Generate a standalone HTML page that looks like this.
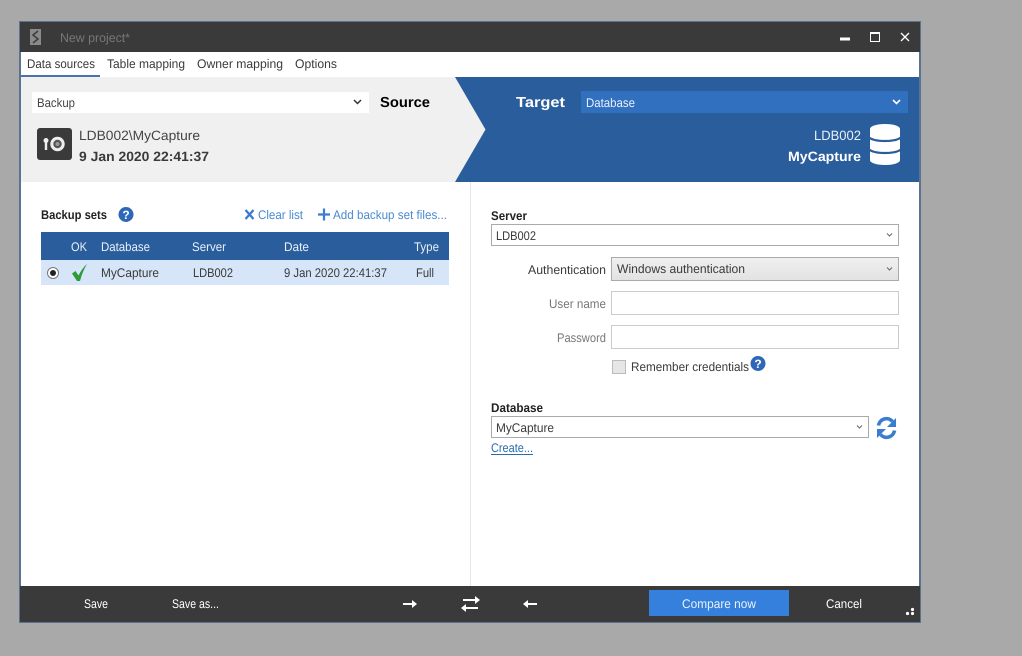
<!DOCTYPE html>
<html lang="en">
<head>
<meta charset="utf-8">
<title>New project*</title>
<style>
html,body{margin:0;padding:0;width:1022px;height:656px;overflow:hidden;background:#a9a9a9}
svg{display:block}
text{font-family:"Liberation Sans",sans-serif;font-size:12.5px;fill:#3a3a3a;white-space:pre;text-rendering:geometricPrecision}
.b{font-weight:bold}
.w{fill:#fff}
.g{fill:#777}
.l{fill:#4a8ad0}
</style>
</head>
<body>
<svg xmlns="http://www.w3.org/2000/svg" width="1022" height="656" viewBox="0 0 1022 656">
<defs>
<linearGradient id="ag" x1="0" y1="0" x2="0" y2="1"><stop offset="0" stop-color="#f0f0f0"/><stop offset="1" stop-color="#e2e2e2"/></linearGradient>
</defs>
<rect width="1022" height="656" fill="#a9a9a9"/>
<!-- window -->
<rect x="19" y="21" width="902" height="602" fill="#5a7390"/>
<rect x="21" y="22" width="898" height="600" fill="#fff"/>
<!-- title bar -->
<rect x="20" y="22" width="900" height="30" fill="#3a3a3a"/>
<path d="M30 29h11v16H30z" fill="#8a8a8a"/>
<path d="M38 31l-5 4 5 4-5 4" fill="none" stroke="#3f3f3f" stroke-width="1.600"/>
<text x="60" y="42" textLength="70" lengthAdjust="spacingAndGlyphs" style="fill:#777">New project*</text>
<rect x="840" y="37.500" width="10" height="3" fill="#fff"/>
<rect x="870.500" y="32.500" width="9" height="9" fill="none" stroke="#fff"/>
<rect x="870" y="32" width="10" height="2" fill="#fff"/>
<path d="M901 33l8 8M909 33l-8 8" stroke="#fff" stroke-width="1.300" fill="none"/>
<!-- tabs -->
<text x="27" y="68" textLength="68" lengthAdjust="spacingAndGlyphs">Data sources</text>
<text x="107" y="68" textLength="78" lengthAdjust="spacingAndGlyphs">Table mapping</text>
<text x="197" y="68" textLength="86" lengthAdjust="spacingAndGlyphs">Owner mapping</text>
<text x="295" y="68" textLength="42" lengthAdjust="spacingAndGlyphs">Options</text>
<rect x="21" y="75" width="79" height="2" fill="#4a72ac"/>
<!-- source / target header -->
<rect x="21" y="77" width="898" height="105" fill="#f0f0f0"/>
<path d="M455 77H919V182H455L485.500 129.500Z" fill="#2a5d9c"/>
<rect x="32" y="92" width="337" height="21" fill="#fff"/>
<text x="37" y="107" textLength="38" lengthAdjust="spacingAndGlyphs" style="fill:#444">Backup</text>
<path d="M354 100l3.500 3.500 3.500-3.500" fill="none" stroke="#333" stroke-width="1.500"/>
<text x="380" y="107" textLength="50" lengthAdjust="spacingAndGlyphs" class="b" style="font-size:14.500px;fill:#000">Source</text>
<text x="516" y="107" textLength="49" lengthAdjust="spacingAndGlyphs" class="b w" style="font-size:14.500px">Target</text>
<rect x="581" y="91" width="327" height="22" fill="#3070bf"/>
<text x="586" y="107" textLength="49" lengthAdjust="spacingAndGlyphs" style="fill:#e8f0fa">Database</text>
<path d="M893 100l3.500 3.500 3.500-3.500" fill="none" stroke="#fff" stroke-width="1.600"/>
<!-- backup icon -->
<rect x="37" y="128" width="35" height="32" rx="3" fill="#3a3a3a"/>
<circle cx="57.500" cy="144" r="5.700" fill="#555" stroke="#eee" stroke-width="3"/>
<circle cx="57.500" cy="144" r="2" fill="#999"/>
<circle cx="46" cy="140.500" r="2.500" fill="#eee"/>
<rect x="44.800" y="141" width="2.400" height="9" fill="#eee"/>
<text x="79" y="140" textLength="121" lengthAdjust="spacingAndGlyphs" style="font-size:13.500px;fill:#444">LDB002\MyCapture</text>
<text x="79" y="161" textLength="130" lengthAdjust="spacingAndGlyphs" class="b" style="font-size:13.500px">9 Jan 2020 22:41:37</text>
<!-- target info -->
<text x="814" y="140" textLength="47" lengthAdjust="spacingAndGlyphs" style="font-size:13.500px;fill:#e8f0fa">LDB002</text>
<text x="788" y="161" textLength="73" lengthAdjust="spacingAndGlyphs" class="b w" style="font-size:13.500px">MyCapture</text>
<!-- db icon -->
<path d="M870 129c0-3 7-5 15-5s15 2 15 5v31c0 3-7 5-15 5s-15-2-15-5z" fill="#fff"/>
<g fill="none" stroke="#2a5d9c" stroke-width="2.200">
<path d="M869 137.500c3 2.300 9 3.500 16 3.500s13-1.200 16-3.500"/>
<path d="M869 149.500c3 2.300 9 3.500 16 3.500s13-1.200 16-3.500"/>
</g>
<!-- divider -->
<rect x="470" y="182" width="1" height="404" fill="#e6e6e6"/>
<!-- backup sets -->
<text x="41" y="219" textLength="66" lengthAdjust="spacingAndGlyphs" class="b" style="fill:#222">Backup sets</text>
<circle cx="126" cy="214.500" r="7.500" fill="#2f67b8"/>
<text x="126" y="219" text-anchor="middle" class="b w" style="font-size:12px">?</text>
<path d="M245.500 210l8 9M253.500 210l-8 9" stroke="#3a7ccf" stroke-width="2.300" fill="none"/>
<text x="258" y="219" textLength="45" lengthAdjust="spacingAndGlyphs" class="l">Clear list</text>
<path d="M318 214.500h12M324 208.500v12" stroke="#3a7ccf" stroke-width="2.200" fill="none"/>
<text x="333" y="219" textLength="114" lengthAdjust="spacingAndGlyphs" class="l">Add backup set files...</text>
<!-- table -->
<rect x="41" y="232" width="408" height="28" fill="#2a5d9c"/>
<rect x="41" y="260" width="408" height="25" fill="#d6e5f8"/>
<text x="71" y="251" textLength="16" lengthAdjust="spacingAndGlyphs" style="fill:#e8f0fa">OK</text>
<text x="101" y="251" textLength="49" lengthAdjust="spacingAndGlyphs" style="fill:#e8f0fa">Database</text>
<text x="192" y="251" textLength="34" lengthAdjust="spacingAndGlyphs" style="fill:#e8f0fa">Server</text>
<text x="284" y="251" textLength="25" lengthAdjust="spacingAndGlyphs" style="fill:#e8f0fa">Date</text>
<text x="414" y="251" textLength="25" lengthAdjust="spacingAndGlyphs" style="fill:#e8f0fa">Type</text>
<circle cx="53" cy="273" r="5.500" fill="#fff" stroke="#777"/>
<circle cx="53" cy="273" r="3" fill="#222"/>
<path d="M72 273.500l3.500-2.500 3 4.500c2.200-4.500 5-8.500 8.500-11.500-3 5-5.500 11-7 17h-3z" fill="#2f9a3a"/>
<text x="101" y="277" textLength="58" lengthAdjust="spacingAndGlyphs">MyCapture</text>
<text x="193" y="277" textLength="40" lengthAdjust="spacingAndGlyphs">LDB002</text>
<text x="284" y="277" textLength="103" lengthAdjust="spacingAndGlyphs">9 Jan 2020 22:41:37</text>
<text x="416" y="277" textLength="18" lengthAdjust="spacingAndGlyphs">Full</text>
<!-- server -->
<text x="491" y="220" textLength="36" lengthAdjust="spacingAndGlyphs" class="b" style="fill:#222">Server</text>
<rect x="491.500" y="224.500" width="407" height="21" fill="#fff" stroke="#aaa"/>
<text x="496" y="240" textLength="40" lengthAdjust="spacingAndGlyphs">LDB002</text>
<path d="M887 233.500l2.500 2.500 2.500-2.500" fill="none" stroke="#666"/>
<text x="528" y="274" textLength="78" lengthAdjust="spacingAndGlyphs">Authentication</text>
<rect x="611.500" y="257.500" width="287" height="23" fill="url(#ag)" stroke="#aaa"/>
<text x="617" y="273" textLength="128" lengthAdjust="spacingAndGlyphs">Windows authentication</text>
<path d="M887 267.500l2.500 2.500 2.500-2.500" fill="none" stroke="#666"/>
<text x="549" y="308" textLength="57" lengthAdjust="spacingAndGlyphs" class="g">User name</text>
<rect x="611.500" y="291.500" width="287" height="23" fill="#fff" stroke="#ccc"/>
<text x="557" y="342" textLength="49" lengthAdjust="spacingAndGlyphs" class="g">Password</text>
<rect x="611.500" y="325.500" width="287" height="23" fill="#fff" stroke="#ccc"/>
<rect x="612.500" y="360.500" width="13" height="13" fill="#e6e6e6" stroke="#bbb"/>
<text x="631" y="371" textLength="118" lengthAdjust="spacingAndGlyphs">Remember credentials</text>
<circle cx="758" cy="363.500" r="7.500" fill="#2f67b8"/>
<text x="758" y="368" text-anchor="middle" class="b w" style="font-size:12px">?</text>
<!-- database -->
<text x="491" y="412" textLength="52" lengthAdjust="spacingAndGlyphs" class="b" style="fill:#222">Database</text>
<rect x="491.500" y="416.500" width="377" height="21" fill="#fff" stroke="#aaa"/>
<text x="496" y="432" textLength="58" lengthAdjust="spacingAndGlyphs">MyCapture</text>
<path d="M857 425.500l2.500 2.500 2.500-2.500" fill="none" stroke="#666"/>
<g fill="none" stroke="#3a7ccf" stroke-width="3.600">
<path d="M878.500 425.500a8 8 0 0 1 14-4"/>
<path d="M894.500 430.500a8 8 0 0 1-14 4"/>
</g>
<path d="M896 418v9h-9z" fill="#3a7ccf"/>
<path d="M877 438v-9h9z" fill="#3a7ccf"/>
<text x="491" y="452" textLength="42" lengthAdjust="spacingAndGlyphs" style="fill:#2a6cab">Create...</text>
<rect x="491" y="454" width="42" height="1" fill="#2a6cab"/>
<!-- footer -->
<rect x="20" y="586" width="900" height="36" fill="#3a3a3a"/>
<text x="84" y="608" textLength="24" lengthAdjust="spacingAndGlyphs" class="w">Save</text>
<text x="172" y="608" textLength="47" lengthAdjust="spacingAndGlyphs" class="w">Save as...</text>
<g fill="#fff">
<path d="M403 603h9v-3l5 4-5 4v-3h-9z"/>
<path d="M537 603h-9v-3l-5 4 5 4v-3h9z"/>
<path d="M463 599h12v-3l5 4-5 4v-3h-12z"/>
<path d="M478 607h-12v-3l-5 4 5 4v-3h12z"/>
</g>
<rect x="649" y="590" width="140" height="26" fill="#3580dc"/>
<text x="682" y="608" textLength="74" lengthAdjust="spacingAndGlyphs" style="fill:#e8f2fc">Compare now</text>
<text x="826" y="608" textLength="36" lengthAdjust="spacingAndGlyphs" class="w">Cancel</text>
<g fill="#fff">
<circle cx="912.500" cy="609.500" r="1.600"/>
<circle cx="912.500" cy="613.500" r="1.600"/>
<circle cx="907.500" cy="613.500" r="1.600"/>
</g>
</svg>
</body>
</html>
